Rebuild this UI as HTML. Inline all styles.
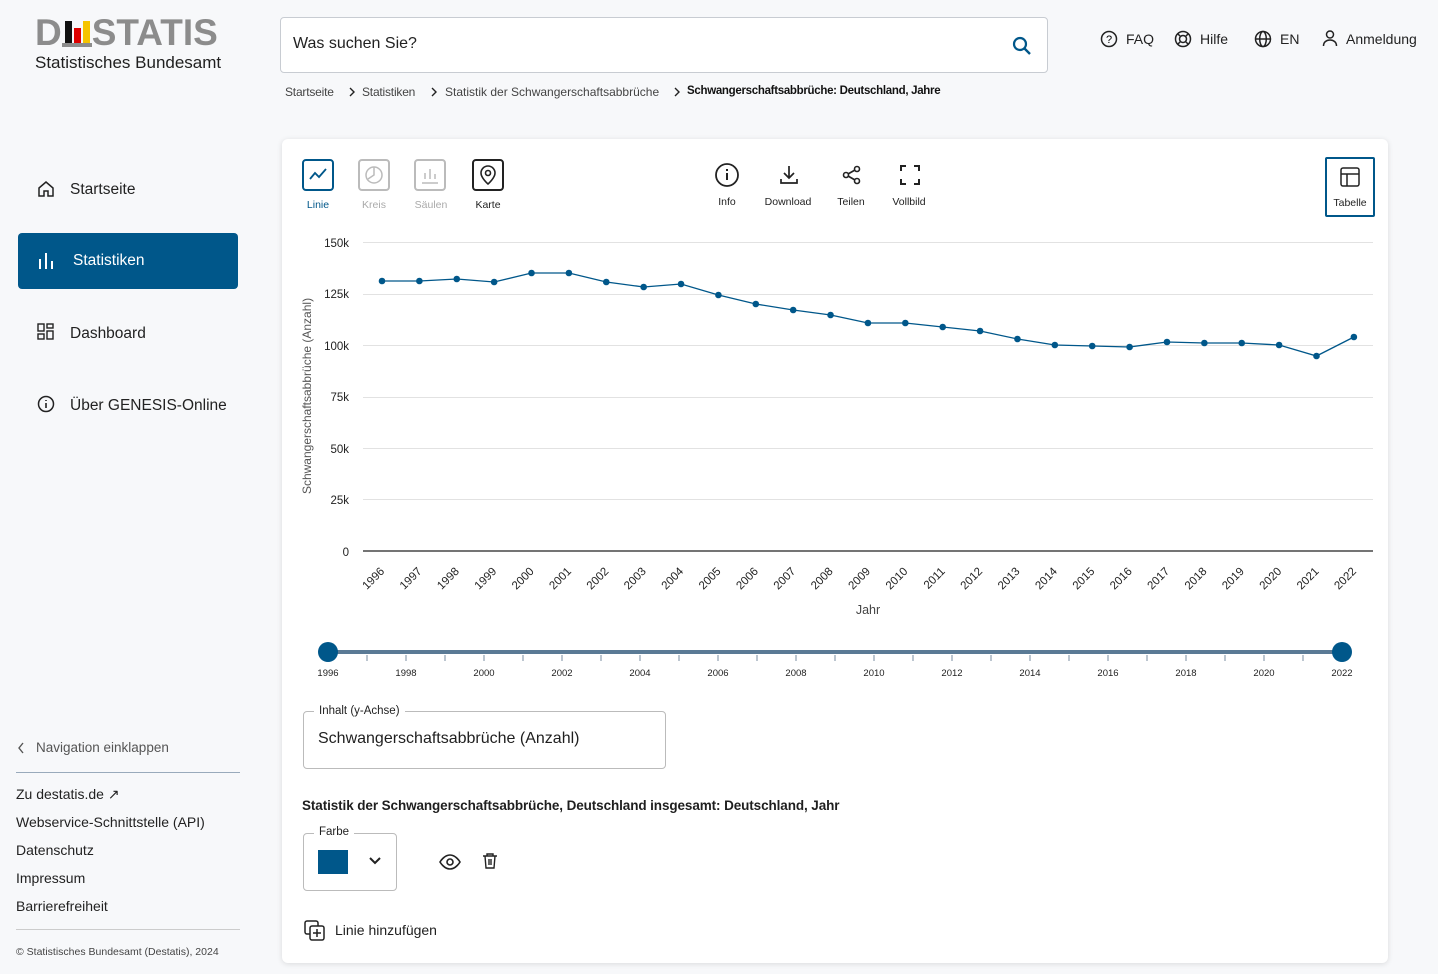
<!DOCTYPE html>
<html><head><meta charset="utf-8"><style>
*{box-sizing:border-box;margin:0;padding:0}
body{width:1438px;height:974px;background:#f7f8fa;font-family:"Liberation Sans",sans-serif;color:#1f1f1f;position:relative;overflow:hidden}
.a{position:absolute}
.logo{left:35px;top:12px;font-family:"Liberation Sans",sans-serif;font-weight:bold;font-size:37px;color:#8c8c8c;letter-spacing:0}
.sub{left:35px;top:53px;font-size:17px;color:#1f1f1f}
.search{left:280px;top:17px;width:768px;height:56px;background:#fff;border:1px solid #c8ccd2;border-radius:4px}
.search span{position:absolute;left:12px;top:17px;font-size:16px;color:#222}
.top{top:31px;font-size:14px;color:#222}
.bc{top:85px;font-size:12px;color:#444;letter-spacing:-0.2px}
.nav{left:38px;font-size:15.5px;color:#222}
.active{left:18px;top:233px;width:220px;height:56px;background:#00578a;border-radius:4px;color:#fff}
.card{left:282px;top:139px;width:1106px;height:824px;background:#fff;border-radius:6px;box-shadow:0 1px 6px rgba(0,0,0,.12)}
.foot{left:16px;font-size:14px;color:#222}
.lbl{font-size:10.5px;text-align:center;width:60px}
</style></head><body>
<div class="a logo">D<span style="display:inline-block;width:30px;height:30px;position:relative;vertical-align:-2px"><i style="position:absolute;left:3px;top:4px;width:7px;height:22px;background:#111"></i><i style="position:absolute;left:12px;top:11px;width:7px;height:15px;background:#d00"></i><i style="position:absolute;left:21px;top:4px;width:7px;height:22px;background:#f5c400"></i><i style="position:absolute;left:0;top:26px;width:30px;height:4px;background:#8c8c8c"></i></span>STATIS</div>
<div class="a sub">Statistisches Bundesamt</div>
<div class="a search"><span>Was suchen Sie?</span>
<svg class="a" style="left:730px;top:17px" width="22" height="22" viewBox="0 0 22 22"><circle cx="9" cy="9" r="6" fill="none" stroke="#00578a" stroke-width="2.2"/><path d="M13.5 13.5L19 19" stroke="#00578a" stroke-width="2.4"/></svg></div>
<svg class="a" style="left:1100px;top:30px" width="18" height="18"><circle cx="9" cy="9" r="7.5" fill="none" stroke="#222" stroke-width="1.5"/><text x="9" y="13" font-size="11" text-anchor="middle" font-family="Liberation Sans">?</text></svg>
<div class="a top" style="left:1126px">FAQ</div>
<svg class="a" style="left:1174px;top:30px" width="18" height="18"><circle cx="9" cy="9" r="7.5" fill="none" stroke="#222" stroke-width="1.5"/><circle cx="9" cy="9" r="3.5" fill="none" stroke="#222" stroke-width="1.5"/><path d="M4 4l2.5 2.5M14 4l-2.5 2.5M4 14l2.5-2.5M14 14l-2.5-2.5" stroke="#222" stroke-width="1.5"/></svg>
<div class="a top" style="left:1200px">Hilfe</div>
<svg class="a" style="left:1254px;top:30px" width="18" height="18"><circle cx="9" cy="9" r="7.5" fill="none" stroke="#222" stroke-width="1.5"/><ellipse cx="9" cy="9" rx="3.3" ry="7.5" fill="none" stroke="#222" stroke-width="1.5"/><path d="M1.5 9h15" stroke="#222" stroke-width="1.5"/></svg>
<div class="a top" style="left:1280px">EN</div>
<svg class="a" style="left:1321px;top:29px" width="18" height="18"><circle cx="9" cy="5.5" r="3.5" fill="none" stroke="#222" stroke-width="1.5"/><path d="M2.5 17c0-4 3-6 6.5-6s6.5 2 6.5 6" fill="none" stroke="#222" stroke-width="1.5"/></svg>
<div class="a top" style="left:1346px">Anmeldung</div>
<div class="a bc" style="left:285px">Startseite</div>
<svg class="a" style="left:348px;top:87px" width="8" height="10"><path d="M2 1l4 4-4 4" fill="none" stroke="#222" stroke-width="1.4"/></svg>
<div class="a bc" style="left:362px">Statistiken</div>
<svg class="a" style="left:430px;top:87px" width="8" height="10"><path d="M2 1l4 4-4 4" fill="none" stroke="#222" stroke-width="1.4"/></svg>
<div class="a bc" style="left:445px;font-size:12px;letter-spacing:0">Statistik der Schwangerschaftsabbrüche</div>
<svg class="a" style="left:673px;top:87px" width="8" height="10"><path d="M2 1l4 4-4 4" fill="none" stroke="#222" stroke-width="1.4"/></svg>
<div class="a bc" style="left:687px;color:#111;font-weight:bold;font-size:11.5px;letter-spacing:-0.3px">Schwangerschaftsabbrüche: Deutschland, Jahre</div>

<svg class="a" style="left:37px;top:180px" width="18" height="18"><path d="M2 8L9 2l7 6v8H11v-5H7v5H2z" fill="none" stroke="#222" stroke-width="1.5"/></svg>
<div class="a nav" style="left:70px;top:181px">Startseite</div>
<div class="a active"><svg class="a" style="left:20px;top:18px" width="16" height="18"><path d="M2 8v10M8 2v16M14 10v8" stroke="#fff" stroke-width="2"/></svg><span class="a" style="left:55px;top:19px;font-size:15.5px">Statistiken</span></div>
<svg class="a" style="left:37px;top:323px" width="18" height="18"><rect x="1" y="1" width="6" height="7" fill="none" stroke="#222" stroke-width="1.4"/><rect x="10" y="1" width="6" height="4" fill="none" stroke="#222" stroke-width="1.4"/><rect x="1" y="11" width="6" height="5" fill="none" stroke="#222" stroke-width="1.4"/><rect x="10" y="8" width="6" height="8" fill="none" stroke="#222" stroke-width="1.4"/></svg>
<div class="a nav" style="left:70px;top:325px">Dashboard</div>
<svg class="a" style="left:37px;top:395px" width="18" height="18"><circle cx="9" cy="9" r="7.5" fill="none" stroke="#222" stroke-width="1.5"/><path d="M9 8v5M9 5v1" stroke="#222" stroke-width="1.6"/></svg>
<div class="a nav" style="left:70px;top:397px">Über GENESIS-Online</div>
<svg class="a" style="left:17px;top:742px" width="8" height="12"><path d="M6 1L2 6l4 5" fill="none" stroke="#555" stroke-width="1.4"/></svg>
<div class="a" style="left:36px;top:740px;font-size:13.5px;color:#555">Navigation einklappen</div>
<div class="a" style="left:16px;top:772px;width:224px;height:1px;background:#9ab"></div>
<div class="a foot" style="top:786px">Zu destatis.de ↗</div>
<div class="a foot" style="top:814px">Webservice-Schnittstelle (API)</div>
<div class="a foot" style="top:842px">Datenschutz</div>
<div class="a foot" style="top:870px">Impressum</div>
<div class="a foot" style="top:898px">Barrierefreiheit</div>
<div class="a" style="left:16px;top:929px;width:224px;height:1px;background:#ccc"></div>
<div class="a" style="left:16px;top:946px;font-size:10.5px;color:#444">© Statistisches Bundesamt (Destatis), 2024</div>

<div class="a card"></div>
<div class="a" style="left:302px;top:159px;width:32px;height:32px;border:2px solid #00578a;border-radius:4px"><svg width="28" height="28"><path d="M6 18l5-6 4 4 7-8" fill="none" stroke="#00578a" stroke-width="1.8"/></svg></div>
<div class="a lbl" style="left:288px;top:199px;color:#00578a">Linie</div>
<div class="a" style="left:358px;top:159px;width:32px;height:32px;border:2px solid #bbb;border-radius:4px"><svg width="28" height="28"><circle cx="14" cy="14" r="8" fill="none" stroke="#bbb" stroke-width="1.5"/><path d="M14 6v8l-6 4" fill="none" stroke="#bbb" stroke-width="1.5"/></svg></div>
<div class="a lbl" style="left:344px;top:199px;color:#aaa">Kreis</div>
<div class="a" style="left:414px;top:159px;width:32px;height:32px;border:2px solid #bbb;border-radius:4px"><svg width="28" height="28"><path d="M9 18v-6M14 18V8M19 18v-5M6 22h16" stroke="#bbb" stroke-width="1.5"/></svg></div>
<div class="a lbl" style="left:401px;top:199px;color:#aaa">Säulen</div>
<div class="a" style="left:472px;top:159px;width:32px;height:32px;border:2px solid #222;border-radius:4px"><svg width="28" height="28"><path d="M14 23s-7-6-7-11a7 7 0 0114 0c0 5-7 11-7 11z" fill="none" stroke="#222" stroke-width="1.6"/><circle cx="14" cy="12" r="2.5" fill="none" stroke="#222" stroke-width="1.6"/></svg></div>
<div class="a lbl" style="left:458px;top:199px">Karte</div>
<svg class="a" style="left:714px;top:162px" width="26" height="26"><circle cx="13" cy="13" r="11" fill="none" stroke="#222" stroke-width="1.8"/><path d="M13 11v7M13 7v2" stroke="#222" stroke-width="2"/></svg>
<div class="a lbl" style="left:697px;top:196px">Info</div>
<svg class="a" style="left:777px;top:163px" width="24" height="24"><path d="M12 3v12M7 10l5 5 5-5M4 16v4h16v-4" fill="none" stroke="#222" stroke-width="1.7"/></svg>
<div class="a lbl" style="left:758px;top:196px">Download</div>
<svg class="a" style="left:840px;top:163px" width="24" height="24"><circle cx="17" cy="6" r="2.5" fill="none" stroke="#222" stroke-width="1.6"/><circle cx="6" cy="12" r="2.5" fill="none" stroke="#222" stroke-width="1.6"/><circle cx="17" cy="18" r="2.5" fill="none" stroke="#222" stroke-width="1.6"/><path d="M8 11l7-4M8 13l7 4" stroke="#222" stroke-width="1.6"/></svg>
<div class="a lbl" style="left:821px;top:196px">Teilen</div>
<svg class="a" style="left:898px;top:163px" width="24" height="24"><path d="M3 8V3h5M16 3h5v5M21 16v5h-5M8 21H3v-5" fill="none" stroke="#222" stroke-width="2"/></svg>
<div class="a lbl" style="left:879px;top:196px">Vollbild</div>
<div class="a" style="left:1325px;top:157px;width:50px;height:60px;border:2px solid #00578a;border-radius:2px"><svg class="a" style="left:12px;top:7px" width="22" height="22"><rect x="2" y="2" width="18" height="18" rx="2" fill="none" stroke="#222" stroke-width="1.5"/><path d="M2 8h18M8 8v12" stroke="#222" stroke-width="1.5"/></svg><div class="a lbl" style="left:-7px;top:38px">Tabelle</div></div>

<svg class="a" style="left:0;top:0" width="1438" height="974" font-family="Liberation Sans,sans-serif">
<g stroke="#e2e2e2" stroke-width="1">
<path d="M363 242.5H1373M363 294.5H1373M363 345.5H1373M363 397.5H1373M363 448.5H1373M363 499.5H1373"/></g>
<path d="M363 551H1373" stroke="#222" stroke-width="1.3"/>
<g font-size="11.5" fill="#222" text-anchor="end">
<text x="349" y="247">150k</text><text x="349" y="298">125k</text><text x="349" y="350">100k</text><text x="349" y="401">75k</text><text x="349" y="453">50k</text><text x="349" y="504">25k</text><text x="349" y="556">0</text></g>
<text transform="translate(311,396) rotate(-90)" font-size="12" fill="#555" text-anchor="middle">Schwangerschaftsabbrüche (Anzahl)</text>
<text x="868" y="614" font-size="12.5" fill="#444" text-anchor="middle">Jahr</text>
<g font-size="11.5" fill="#222" text-anchor="end" id="xl"></g>
<polyline fill="none" stroke="#00578a" stroke-width="1.3" points="382,281 419.4,281 456.8,279 494.1,282 531.5,273 568.9,273 606.3,282 643.7,287 681,284 718.4,295 755.8,304 793.2,310 830.6,315 868,323 905.3,323 942.7,327 980.1,331 1017.5,339 1054.9,345 1092.2,346 1129.6,347 1167,342 1204.4,343 1241.7,343 1279.1,345 1316.5,356 1353.9,337"/>
<g fill="#00578a" id="pts"></g>
<path d="M328 652H1342" stroke="#5a7a95" stroke-width="4"/>
<g id="tk" stroke="#7a8ea0"></g>
<circle cx="328" cy="652" r="10" fill="#00578a"/><circle cx="1342" cy="652" r="10" fill="#00578a"/>
<g font-size="9.5" fill="#222" text-anchor="middle" id="sl"></g>
</svg>

<div class="a" style="left:303px;top:711px;width:363px;height:58px;border:1px solid #bbb;border-radius:4px"></div>
<div class="a" style="left:314px;top:705px;background:#fff;padding:0 5px;font-size:11.5px">Inhalt (y-Achse)</div>
<div class="a" style="left:318px;top:730px;font-size:16px">Schwangerschaftsabbrüche (Anzahl)</div>
<div class="a" style="left:302px;top:798px;font-size:13.5px;font-weight:bold;letter-spacing:-0.1px">Statistik der Schwangerschaftsabbrüche, Deutschland insgesamt: Deutschland, Jahr</div>
<div class="a" style="left:303px;top:833px;width:94px;height:58px;border:1px solid #bbb;border-radius:4px"><div class="a" style="left:14px;top:16px;width:30px;height:24px;background:#00578a"></div><svg class="a" style="left:64px;top:22px" width="14" height="10"><path d="M2 2l5 5 5-5" fill="none" stroke="#222" stroke-width="2"/></svg></div>
<div class="a" style="left:314px;top:826px;background:#fff;padding:0 5px;font-size:11.5px">Farbe</div>
<svg class="a" style="left:439px;top:852px" width="22" height="20"><path d="M1 10s4-7 10-7 10 7 10 7-4 7-10 7S1 10 1 10z" fill="none" stroke="#222" stroke-width="1.6"/><circle cx="11" cy="10" r="3" fill="none" stroke="#222" stroke-width="1.6"/></svg>
<svg class="a" style="left:482px;top:852px" width="16" height="18"><path d="M1 4h14M5 4V2h6v2M3 4l1 12h8l1-12M7 7v6M9 7v6" fill="none" stroke="#222" stroke-width="1.4"/></svg>
<svg class="a" style="left:304px;top:920px" width="22" height="22"><rect x="1" y="1" width="13" height="13" rx="2" fill="none" stroke="#222" stroke-width="1.5"/><rect x="6" y="6" width="14" height="14" rx="2" fill="#fff" stroke="#222" stroke-width="1.5"/><path d="M13 9v8M9 13h8" stroke="#222" stroke-width="1.5"/></svg>
<div class="a" style="left:335px;top:922px;font-size:14px">Linie hinzufügen</div>
<script>
var ys=[281,281,279,282,273,273,282,287,284,295,304,310,315,323,323,327,331,339,345,346,347,342,343,343,345,356,337];
var ns="http://www.w3.org/2000/svg",p=document.getElementById('pts'),xl=document.getElementById('xl'),tk=document.getElementById('tk'),sl=document.getElementById('sl');
for(var i=0;i<27;i++){var x=382+i*37.38;var c=document.createElementNS(ns,'circle');c.setAttribute('cx',x);c.setAttribute('cy',ys[i]);c.setAttribute('r',3.3);p.appendChild(c);
var t=document.createElementNS(ns,'text');t.setAttribute('transform','translate('+(x+3)+',572) rotate(-45)');t.textContent=1996+i;xl.appendChild(t);
var sx=328+i*39;var l=document.createElementNS(ns,'path');l.setAttribute('d','M'+sx+' 655v6');tk.appendChild(l);
if(i%2==0){var s=document.createElementNS(ns,'text');s.setAttribute('x',sx);s.setAttribute('y',676);s.textContent=1996+i;sl.appendChild(s);}}
</script>
</body></html>
